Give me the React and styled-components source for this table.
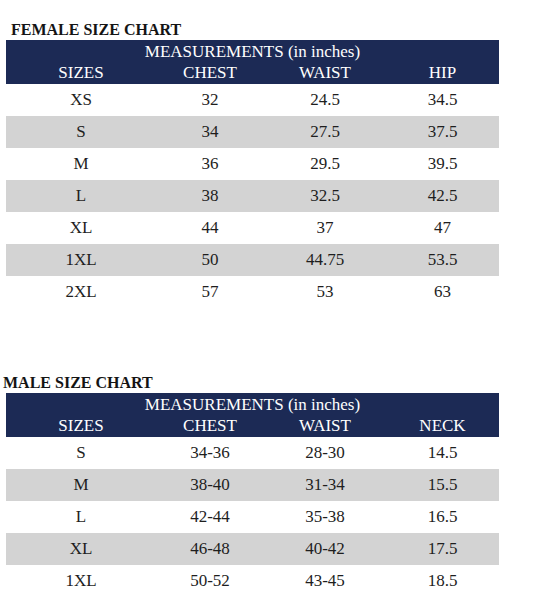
import styled, { createGlobalStyle } from "styled-components";

const female = {
  title: "FEMALE SIZE CHART",
  indent: 11,
  columns: ["SIZES", "CHEST", "WAIST", "HIP"],
  rows: [
    ["XS", "32", "24.5", "34.5"],
    ["S", "34", "27.5", "37.5"],
    ["M", "36", "29.5", "39.5"],
    ["L", "38", "32.5", "42.5"],
    ["XL", "44", "37", "47"],
    ["1XL", "50", "44.75", "53.5"],
    ["2XL", "57", "53", "63"],
  ],
};

const male = {
  title: "MALE SIZE CHART",
  indent: 3,
  columns: ["SIZES", "CHEST", "WAIST", "NECK"],
  rows: [
    ["S", "34-36", "28-30", "14.5"],
    ["M", "38-40", "31-34", "15.5"],
    ["L", "42-44", "35-38", "16.5"],
    ["XL", "46-48", "40-42", "17.5"],
    ["1XL", "50-52", "43-45", "18.5"],
  ],
};

function Chart({ data, top }) {
  return (
    <Section $top={top}>
      <Title $indent={data.indent}>{data.title}</Title>
      <Table>
        <Header>
          <Caption>MEASUREMENTS (in inches)</Caption>
          <Grid>
            {data.columns.map((c) => (
              <Cell key={c}>{c}</Cell>
            ))}
          </Grid>
        </Header>
        {data.rows.map((r, i) => (
          <Row key={r[0]} $shaded={i % 2 === 1}>
            {r.map((v, j) => (
              <Cell key={j}>{v}</Cell>
            ))}
          </Row>
        ))}
      </Table>
    </Section>
  );
}

export default function App() {
  return (
    <>
      <GlobalStyle />
      <Page>
        <Chart data={female} top={21} />
        <Chart data={male} top={66} />
      </Page>
    </>
  );
}

const GlobalStyle = createGlobalStyle`
  body {
    margin: 0;
    background: #ffffff;
    font-family: "Liberation Serif", "Times New Roman", serif;
  }
`;

const Page = styled.div`
  width: 556px;
  height: 613px;
  background: #fff;
  overflow: hidden;
`;

const Section = styled.section`
  margin-top: ${(p) => p.$top}px;
`;

const Title = styled.div`
  padding-left: ${(p) => p.$indent}px;
  font-size: 16px;
  line-height: 18px;
  font-weight: bold;
  color: #141414;
  margin-bottom: 1px;
`;

const Table = styled.div`
  margin-left: 6px;
  width: 493px;
`;

const Header = styled.div`
  background: #1c2a55;
  color: #ffffff;
  padding: 1px 0 1px;
  font-size: 17px;
  line-height: 21px;
`;

const Caption = styled.div`
  text-align: center;
`;

const Grid = styled.div`
  display: grid;
  grid-template-columns: 150px 108px 122px 113px;
`;

const Row = styled(Grid)`
  height: 32px;
  line-height: 32px;
  font-size: 17px;
  color: #1e1e1e;
  background: ${(p) => (p.$shaded ? "#d3d3d3" : "transparent")};
`;

const Cell = styled.div`
  text-align: center;
  white-space: nowrap;
`;
